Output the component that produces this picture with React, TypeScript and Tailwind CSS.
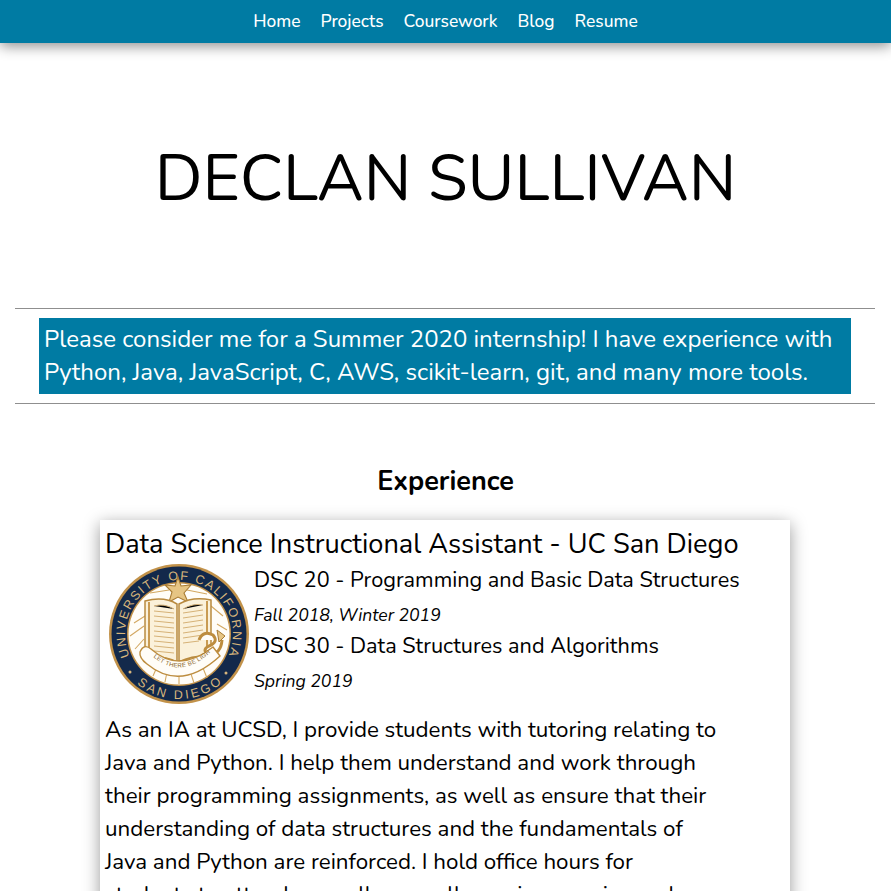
import React from "react";

const Seal = () => {
  return (
    <svg viewBox="0 0 140 140" className="w-[140px] h-[140px] shrink-0">
      <defs>
        <path id="sealTop" d="M 20.7 92 A 54 54 0 1 1 119.3 92" />
        <path id="sealBottom" d="M 25 117 A 65 65 0 0 0 115 117" />
        <path id="ribbon" d="M 42 91 Q 70 117 101 89" />
      </defs>
      <circle cx="70" cy="70" r="70" fill="#c2924a" />
      <circle cx="70" cy="70" r="67.5" fill="#13294b" />
      <circle cx="70" cy="70" r="52" fill="#c2924a" />
      <circle cx="70" cy="70" r="50.5" fill="#fffdf8" />
      <text className="font-['Liberation_Sans',sans-serif]" fontSize="12.5" fill="#d8b67c">
        <textPath href="#sealTop" textLength="213">UNIVERSITY OF CALIFORNIA</textPath>
      </text>
      <text className="font-['Liberation_Sans',sans-serif]" fontSize="12.5" fill="#d8b67c">
        <textPath href="#sealBottom" startOffset="4" textLength="92">SAN DIEGO</textPath>
      </text>
      <circle cx="21" cy="108" r="1.5" fill="#d8b67c" />
      <circle cx="117" cy="109" r="1.5" fill="#d8b67c" />
      {/* rays */}
      <path d="M 25 59 L 36 52 M 21 72 L 35 62 M 26 85 L 35 75 M 41 29 L 60 26 M 78 26 L 98 30 M 102 42 L 114 52 M 108 60 L 118 66 M 48 103 L 44 112 M 58 108 L 56 118 M 70 110 L 70 120 M 82 110 L 85 119 M 94 104 L 98 114" stroke="#d3a862" strokeWidth="1.1" fill="none" />
      <path d="M 69 13 L 72 22 L 82 21 L 75 29 L 79 38 L 69 33 L 60 38 L 63 28 L 56 21 L 66 22 Z" fill="#e6c584" stroke="#a87b33" strokeWidth="1.1" />
      {/* book */}
      <path d="M 36 37 Q 55 32 68 40 L 68 98 Q 54 91 36 94 Z" fill="#fbf1da" stroke="#b98a3f" strokeWidth="1.5" />
      <path d="M 102 36 Q 84 32 70 40 L 70 98 Q 84 91 102 92 Z" fill="#fbf1da" stroke="#b98a3f" strokeWidth="1.5" />
      <path d="M 40 38 L 40 93 M 98 37 L 98 91" stroke="#c99b52" strokeWidth="2" />
      <g stroke="#d6b277" strokeWidth="1">
        <path d="M 45 42 Q 55 39 65 45 M 45 47 L 65 49 M 45 52 L 65 54 M 45 57 L 65 59 M 45 62 L 65 64 M 45 67 L 65 69 M 45 72 L 65 74 M 45 77 L 65 79 M 45 82 L 65 84 M 45 87 L 65 89" />
        <path d="M 74 45 Q 84 39 94 41 M 74 49 L 94 46 M 74 54 L 94 51 M 74 59 L 94 56 M 74 64 L 94 61 M 74 69 L 94 66 M 74 74 L 94 71 M 74 79 L 90 77" />
      </g>
      {/* serpent */}
      <path d="M 90 76 Q 94 66 104 71 Q 110 78 100 82 Q 92 86 100 91 Q 112 90 113 76" fill="#fffdf8" stroke="#bd8d3f" strokeWidth="3" />
      <path d="M 108 66 L 116 72 L 110 78 Z" fill="#e6c584" stroke="#a87b33" strokeWidth="1" />
      {/* ribbon */}
      <path d="M 31 88 Q 35 79 42 85 Q 70 110 104 83 L 111 92 Q 72 128 38 100 Q 30 94 31 88 Z" fill="#fffdf8" stroke="#bd8d3f" strokeWidth="1.4" />
      <text className="font-['Liberation_Sans',sans-serif]" fontSize="6" fill="#8a6527">
        <textPath href="#ribbon" startOffset="3" textLength="68">LET THERE BE LIGHT</textPath>
      </text>
    </svg>
  );
};

const App = () => {
  return (
    <div className="h-[891px] overflow-hidden bg-white text-black font-['Nunito','Noto_Sans',sans-serif]">
      <nav className="h-[43px] bg-[#007ba3] shadow-[0_3px_14px_rgba(0,0,0,0.45)] flex items-center justify-center gap-[20px] text-[17.4px] font-medium text-white relative">
        <a>Home</a>
        <a>Projects</a>
        <a>Coursework</a>
        <a>Blog</a>
        <a>Resume</a>
      </nav>

      <h1 className="mt-[89px] h-[93px] leading-[94px] text-center text-[64.4px] font-normal">DECLAN SULLIVAN</h1>

      <div className="ml-[15px] w-[860px] mt-[83px] border-y border-[#8f8f8f] py-[9px] flex justify-center">
        <p className="w-[812px] h-[76px] bg-[#007ba3] text-white text-[24px] leading-[33px] p-[5px]">
          Please consider me for a Summer 2020 internship! I have experience with
          Python, Java, JavaScript, C, AWS, scikit-learn, git, and many more tools.
        </p>
      </div>

      <h2 className="mt-[60px] text-center text-[27px] leading-[36px] font-bold">Experience</h2>

      <div className="mt-[20px] ml-[100px] w-[690px] bg-white shadow-[0_4px_16px_rgba(0,0,0,0.4)] px-[5px] pb-6">
        <h3 className="text-[27.2px] leading-[50px] h-[44px]">Data Science Instructional Assistant - UC San Diego</h3>
        <div className="flex gap-[5px]">
          <div className="pl-[4px]"><Seal /></div>
          <div>
            <p className="text-[21.7px] leading-[33px] h-[33px]">DSC 20 - Programming and Basic Data Structures</p>
            <p className="text-[17.6px] leading-[36px] h-[33px] italic">Fall 2018, Winter 2019</p>
            <p className="text-[21.7px] leading-[33px] h-[33px]">DSC 30 - Data Structures and Algorithms</p>
            <p className="text-[17.6px] leading-[36px] h-[33px] italic">Spring 2019</p>
          </div>
        </div>
        <p className="mt-[9px] text-[22.35px] leading-[33px] w-[615px]">
          As an IA at UCSD, I provide students with tutoring relating to Java and Python. I help them understand and work through their programming assignments, as well as ensure that their understanding of data structures and the fundamentals of Java and Python are reinforced. I hold office hours for students to attend, as well as smaller review sessions where
        </p>
      </div>
    </div>
  );
};

export default App;
